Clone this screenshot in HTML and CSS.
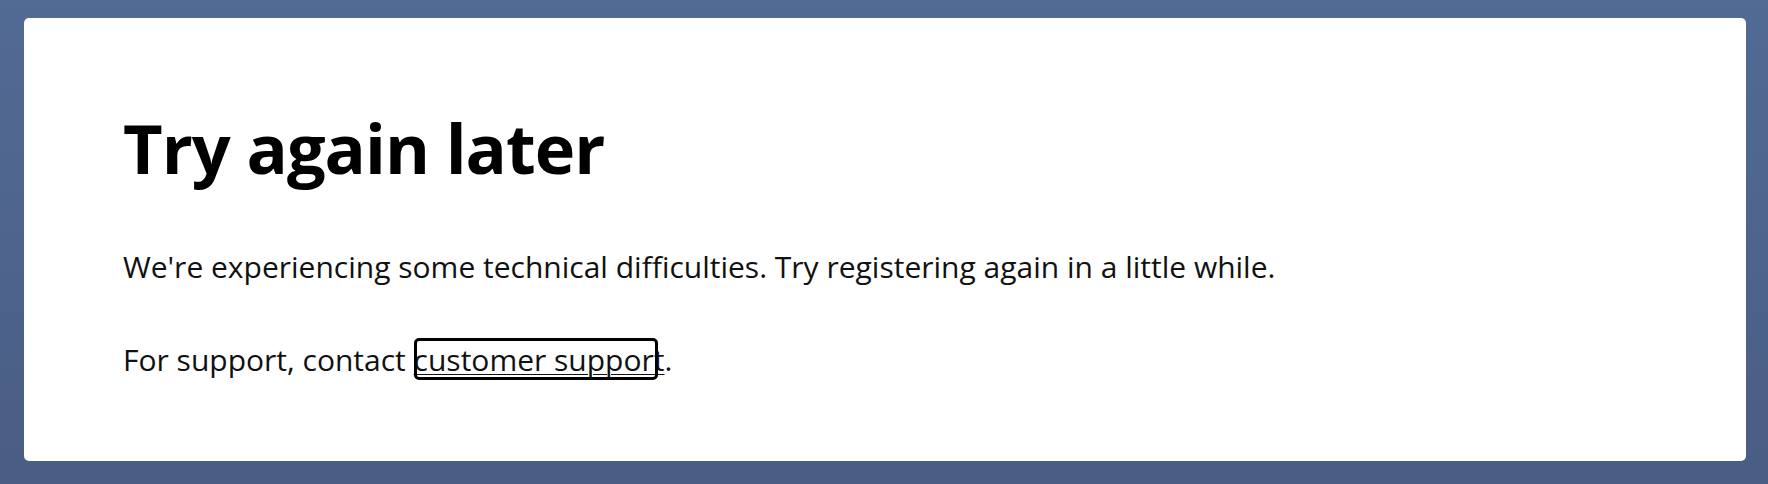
FILE: index.html
```html
<!DOCTYPE html>
<html lang="en">
<head>
<meta charset="utf-8">
<title>Try again later</title>
<link rel="stylesheet" href="styles.css">
</head>
<body>
<main class="card">
  <h1 class="title">Try again later</h1>
  <p class="text">We're experiencing some technical difficulties. Try registering again in a little while.</p>
  <p class="text support">For support, contact <a class="link" href="#">customer support</a>.</p>
</main>
</body>
</html>
```
FILE: styles.css
```css
html, body {
  margin: 0;
  height: 100%;
}
body {
  background: linear-gradient(180deg, #526b94 0%, #4a5d84 100%);
  padding: 18px 22px 23px 24px;
  box-sizing: border-box;
  font-family: "Open Sans", "Noto Sans", sans-serif;
  color: #000;
}
.card {
  background: #fff;
  border-radius: 5px;
  height: 443px;
  box-sizing: border-box;
  padding: 82px 99px 0 99px;
}
.title {
  margin: 0;
  font-weight: 700;
  font-size: 68.5px;
  line-height: 96px;
  letter-spacing: -1px;
}
.text {
  margin: 51px 0 0;
  font-size: 30px;
  line-height: 40px;
  color: #111;
}
.support {
  margin-top: 53px;
}
.link {
  position: relative;
  color: #111;
  text-decoration: underline;
  text-underline-offset: 3px;
  text-decoration-thickness: 1px;
}
.link::after {
  content: "";
  position: absolute;
  left: 0;
  right: 6px;
  top: -1px;
  bottom: 0;
  border: 3px solid #000;
  border-radius: 5px;
}
```
